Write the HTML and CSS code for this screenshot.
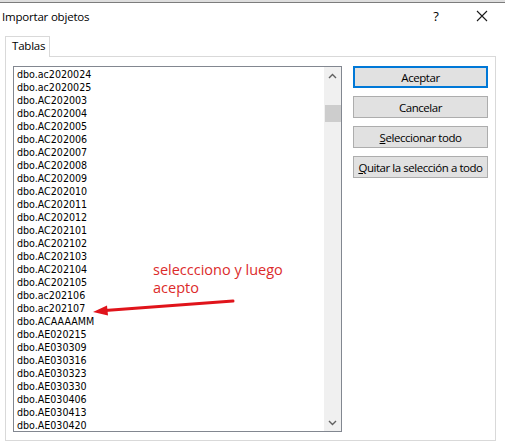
FILE: index.html
```html
<!DOCTYPE html>
<html lang="es">
<head>
<meta charset="utf-8">
<title>Importar objetos</title>
<link rel="stylesheet" href="styles.css">
</head>
<body>
<div class="dialog">
  <div class="chrome"></div>
  <div class="titlebar">
    <span class="title">Importar objetos</span>
    <span class="tb-btn help">?</span>
    <span class="tb-btn close">
      <svg width="12" height="12" viewBox="0 0 12 12"><path d="M1 1 L11 11 M11 1 L1 11" stroke="#1a1a1a" stroke-width="1.1" fill="none"/></svg>
    </span>
  </div>
  <div class="body">
    <div class="tabs">
      <div class="tab">Tablas</div>
    </div>
    <div class="panel">
      <div class="listbox">
        <ul class="items">
          <li>dbo.ac2020024</li>
          <li>dbo.ac2020025</li>
          <li>dbo.AC202003</li>
          <li>dbo.AC202004</li>
          <li>dbo.AC202005</li>
          <li>dbo.AC202006</li>
          <li>dbo.AC202007</li>
          <li>dbo.AC202008</li>
          <li>dbo.AC202009</li>
          <li>dbo.AC202010</li>
          <li>dbo.AC202011</li>
          <li>dbo.AC202012</li>
          <li>dbo.AC202101</li>
          <li>dbo.AC202102</li>
          <li>dbo.AC202103</li>
          <li>dbo.AC202104</li>
          <li>dbo.AC202105</li>
          <li>dbo.ac202106</li>
          <li>dbo.ac202107</li>
          <li>dbo.ACAAAAMM</li>
          <li>dbo.AE020215</li>
          <li>dbo.AE030309</li>
          <li>dbo.AE030316</li>
          <li>dbo.AE030323</li>
          <li>dbo.AE030330</li>
          <li>dbo.AE030406</li>
          <li>dbo.AE030413</li>
          <li>dbo.AE030420</li>
        </ul>
        <div class="scrollbar">
          <div class="sb-arrow">
            <svg width="9" height="6" viewBox="0 0 9 6"><path d="M1 5 L4.5 1.5 L8 5" stroke="#606060" stroke-width="1.4" fill="none"/></svg>
          </div>
          <div class="sb-track">
            <div class="sb-thumb"></div>
          </div>
          <div class="sb-arrow">
            <svg width="9" height="6" viewBox="0 0 9 6"><path d="M1 1 L4.5 4.5 L8 1" stroke="#606060" stroke-width="1.4" fill="none"/></svg>
          </div>
        </div>
      </div>
      <div class="buttons">
        <button class="btn default">Aceptar</button>
        <button class="btn">Cancelar</button>
        <button class="btn"><u>S</u>eleccionar todo</button>
        <button class="btn"><u>Q</u>uitar la selección a todo</button>
      </div>
      <div class="note">seleccciono y luego<br>acepto</div>
      <svg class="arrow" width="150" height="20" viewBox="0 0 150 20">
        <path d="M14 12.5 L142 3" stroke="#e0141b" stroke-width="3" fill="none" stroke-linecap="round"/>
        <path d="M2 14 L16 7.5 L17 17.5 Z" fill="#e0141b"/>
      </svg>
    </div>
  </div>
</div>
</body>
</html>
```
FILE: styles.css
```css
* { box-sizing: border-box; }
html, body { margin: 0; padding: 0; background: #ffffff; }
body { width: 505px; height: 448px; overflow: hidden; font-family: "Open Sans", "Noto Sans", sans-serif; color: #000; }

.dialog { width: 505px; height: 448px; background: #ffffff; }

.chrome { height: 3px; background: #dedede; border-bottom: 1px solid #7c7c7c; }

.titlebar { height: 29px; display: flex; align-items: center; padding-left: 2px; }
.title { font-size: 11.5px; flex: 1; padding-bottom: 3px; letter-spacing: -0.2px; }
.tb-btn { display: flex; align-items: center; justify-content: center; height: 28px; padding-bottom: 3px; }
.help { width: 46px; font-size: 13px; }
.close { width: 46px; }

.body { padding: 4px 9px 0 5px; }

.tabs { display: flex; height: 20px; }
.tab { width: 45px; height: 21px; border: 1px solid #d9d9d9; border-bottom: none; background: #fff; font-size: 11.5px; letter-spacing: -0.2px; padding-left: 6px; line-height: 18px; position: relative; z-index: 1; }

.panel { position: relative; height: 385px; border: 1px solid #d9d9d9; background: #fff; display: flex; padding: 9px 7px 0 7px; gap: 11px; }

.listbox { width: 329px; height: 366px; border: 1px solid #828790; display: flex; background: #fff; }
.items { list-style: none; margin: 0; padding: 1px 0 0 3px; flex: 1; overflow: hidden; font-family: "DejaVu Sans Condensed", "DejaVu Sans", sans-serif; font-stretch: condensed; font-size: 10.6px; }
.items li { height: 13px; line-height: 13px; white-space: nowrap; }

.scrollbar { width: 17px; background: #f0f0f0; display: flex; flex-direction: column; }
.sb-arrow { height: 17px; display: flex; align-items: center; justify-content: center; }
.sb-track { flex: 1; padding-top: 21px; display: flex; flex-direction: column; align-items: center; }
.sb-thumb { width: 16px; height: 17px; background: #cdcdcd; }

.buttons { display: flex; flex-direction: column; gap: 8px; }
.btn { width: 135px; height: 22px; border: 1px solid #adadad; background: #e1e1e1; font-family: "Open Sans", "Noto Sans", sans-serif; font-size: 11.5px; color: #000; padding: 0; letter-spacing: -0.45px; white-space: nowrap; }
.btn.default { border: 2px solid #0078d7; }
.btn u { text-decoration: underline; text-underline-offset: 1px; }

.note { position: absolute; left: 147px; top: 204px; font-family: "Open Sans", "Noto Sans", sans-serif; font-size: 14.5px; line-height: 18px; color: #dc2b2b; }
.arrow { position: absolute; left: 85px; top: 241px; }
```
